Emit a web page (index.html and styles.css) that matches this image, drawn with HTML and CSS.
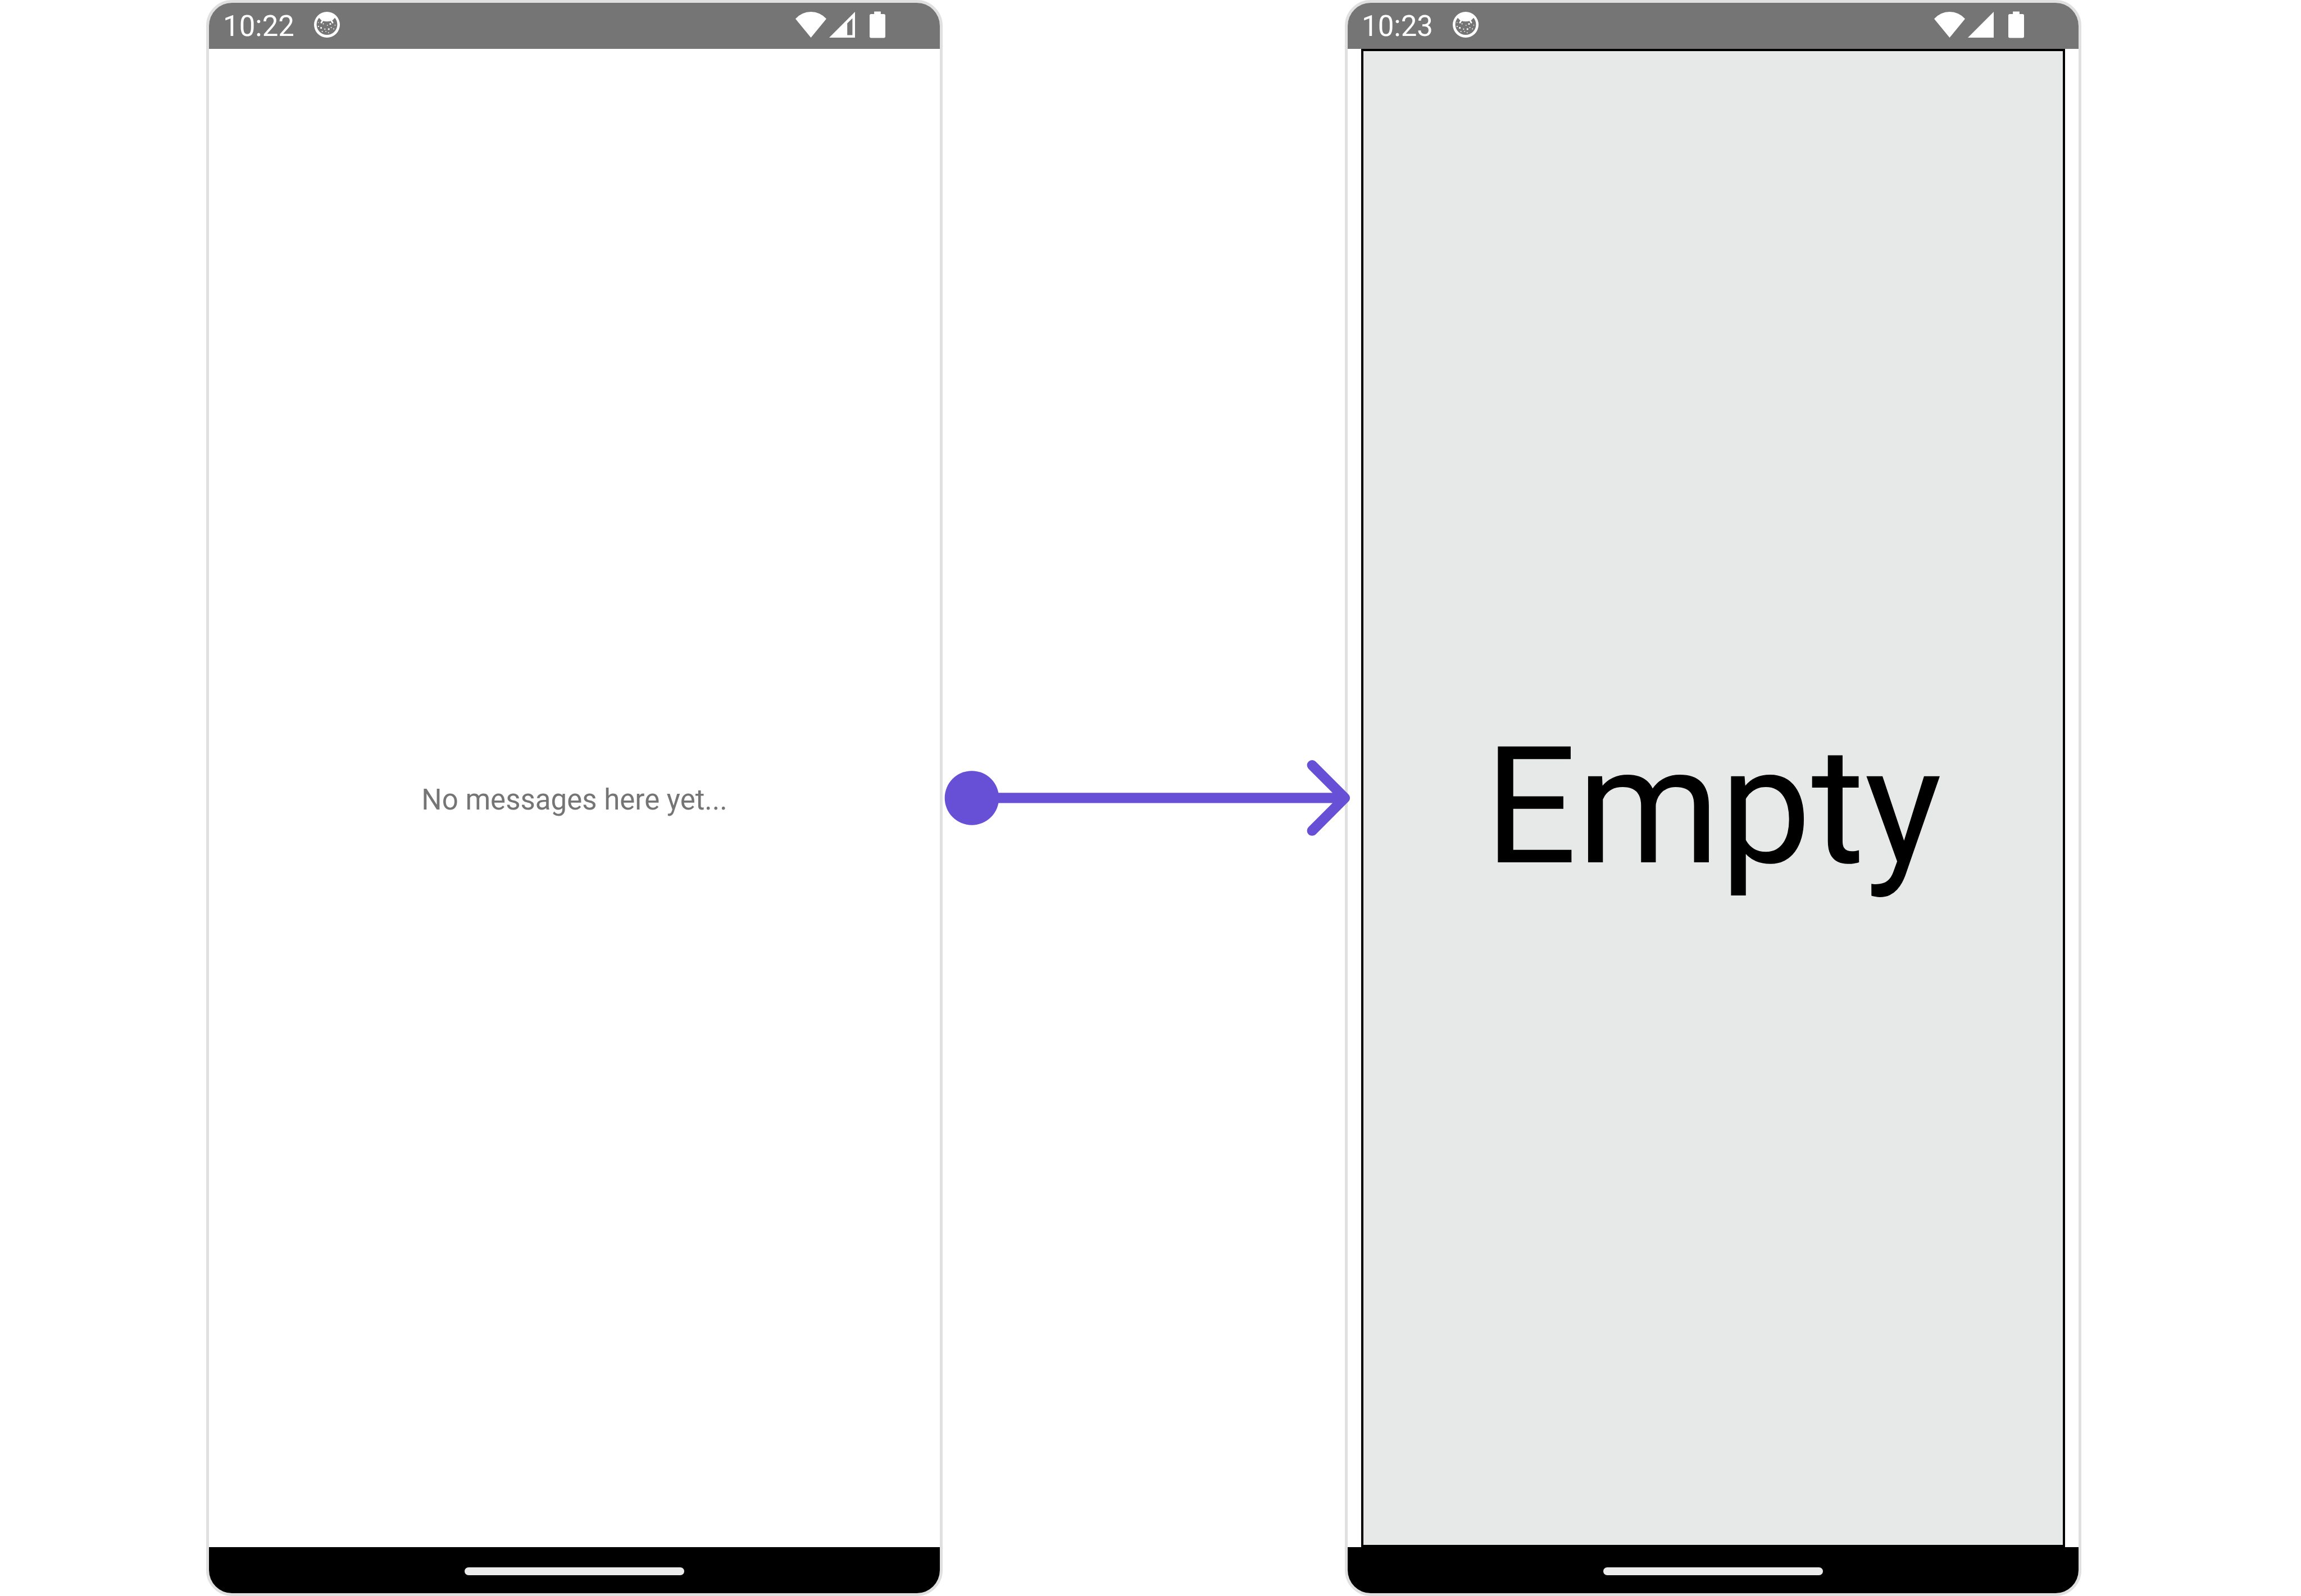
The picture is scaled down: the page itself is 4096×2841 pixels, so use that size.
FILE: index.html
```html
<!DOCTYPE html>
<html lang="en">
<head>
<meta charset="utf-8">
<title>Empty state</title>
<link rel="stylesheet" href="styles.css">
</head>
<body>
<svg class="sprite" aria-hidden="true">
  <symbol id="face" viewBox="0 0 50 50">
    <path fill-rule="evenodd" d="M25 0A25 25 0 1 1 25 50A25 25 0 1 1 25 0ZM9.7 11.8L13.5 15.7L16.5 17.5Q25 20.2 33.5 17.5L36.5 15.7L40.3 11.8A20 20 0 1 1 9.7 11.8Z"/>
    <path class="whisker" d="M17 16L14 21M33 16L36 21"/>
    <path d="M7.5 20h1.6v1.6h-1.6zM7.5 27.3h2v2h-2zM12.2 29.5h3v3h-3zM15 37.2h1.8v1.8h-1.8zM20 32.4h2v2h-2zM17 22.3h2v2h-2zM25 25.4h1.5v1.5h-1.5zM27 32h3v3h-3zM22.2 37.2h1.6v1.6h-1.6zM27.2 39.6h1.6v1.6h-1.6zM30 22h3v3h-3zM32.3 29.7h2v1.5h-2zM37.3 32.2h1.7v1.7h-1.7zM39.9 24.9h1.6v1.6h-1.6z"/>
  </symbol>
  <symbol id="wifi" viewBox="0 0 60 50"><path d="M30 50L0 13.5A40 40 0 0 1 60 13.5Z"/></symbol>
  <symbol id="signal-partial" viewBox="0 0 50 50"><path fill-rule="evenodd" d="M0 50L50 0V50ZM35 22.3L45 12.5V45H35Z"/></symbol>
  <symbol id="signal-full" viewBox="0 0 50 50"><path d="M0 50L50 0V50Z"/></symbol>
  <symbol id="battery" viewBox="0 0 31 52"><path d="M9 0H22V5H28Q31 5 31 8V49Q31 52 28 52H3Q0 52 0 49V8Q0 5 3 5H9Z"/></symbol>
</svg>
<main class="comparison">
  <section class="phone phone-before">
    <header class="status-bar">
      <time class="clock">10:22</time>
      <svg class="icon-face"><use href="#face"/></svg>
      <svg class="icon-wifi"><use href="#wifi"/></svg>
      <svg class="icon-signal"><use href="#signal-partial"/></svg>
      <svg class="icon-battery"><use href="#battery"/></svg>
    </header>
    <div class="screen">
      <p class="message">No messages here yet...</p>
    </div>
    <footer class="nav-bar"><div class="handle"></div></footer>
  </section>
  <svg class="arrow" viewBox="0 0 786 148" aria-hidden="true">
    <circle cx="57" cy="74" r="53"/>
    <path d="M57 74H786M722 10L786 74L722 138"/>
  </svg>
  <section class="phone phone-after">
    <header class="status-bar">
      <time class="clock">10:23</time>
      <svg class="icon-face"><use href="#face"/></svg>
      <svg class="icon-wifi"><use href="#wifi"/></svg>
      <svg class="icon-signal"><use href="#signal-full"/></svg>
      <svg class="icon-battery"><use href="#battery"/></svg>
    </header>
    <div class="screen screen-custom">
      <p class="placeholder">Empty</p>
    </div>
    <footer class="nav-bar"><div class="handle"></div></footer>
  </section>
</main>
</body>
</html>
```
FILE: styles.css
```css
* {
  box-sizing: border-box;
}

body {
  margin: 0;
  background: #fff;
  font-family: Roboto, sans-serif;
}

p {
  margin: 0;
}

.sprite {
  display: none;
}

.comparison {
  display: grid;
  grid-template-columns: 367fr 1311fr 716fr 1311fr 391fr;
  align-items: center;
  min-height: 100vh;
}

.phone {
  display: flex;
  flex-direction: column;
  align-self: stretch;
  overflow: hidden;
  border: 5px solid #e0e0e0;
  border-radius: 46px;
  background: #fff;
}

.phone-before {
  grid-column: 2;
}

.phone-after {
  grid-column: 4;
}

.status-bar {
  display: flex;
  align-items: center;
  height: 82px;
  padding: 0 97px 4px 25px;
  background: #757575;
  color: #fff;
  fill: currentColor;
}

.clock {
  padding-top: 6px;
  font-size: 51px;
  line-height: 60px;
}

.icon-face {
  width: 46px;
  height: 46px;
  margin-left: 35px;
}

.whisker {
  fill: none;
  stroke: #fff;
  stroke-width: 3;
  stroke-linecap: round;
}

.icon-wifi {
  width: 55px;
  height: 46px;
  margin-left: auto;
}

.icon-signal {
  width: 46px;
  height: 46px;
  margin: 0 26px 0 5px;
}

.icon-battery {
  width: 28px;
  height: 48px;
}

.screen {
  display: flex;
  flex: 1;
  align-items: center;
  justify-content: center;
}

.screen-custom {
  margin: 0 24px;
  border: 4px solid #000;
  background: #e7e9e8;
}

.message {
  padding-top: 6px;
  color: #757575;
  font-size: 51px;
  line-height: 60px;
}

.placeholder {
  padding-top: 30px;
  color: #000;
  font-size: 290px;
  line-height: 340px;
}

.nav-bar {
  display: flex;
  align-items: center;
  justify-content: center;
  height: 82px;
  padding-top: 4px;
  background: #000;
}

.handle {
  width: 30%;
  height: 14px;
  border-radius: 7px;
  background: #ebebeb;
}

.arrow {
  grid-column: 3;
  z-index: 1;
  width: 100%;
  overflow: visible;
  fill: #6750d6;
}

.arrow path {
  fill: none;
  stroke: #6750d6;
  stroke-width: 20;
  stroke-linecap: round;
  stroke-linejoin: round;
}
```
